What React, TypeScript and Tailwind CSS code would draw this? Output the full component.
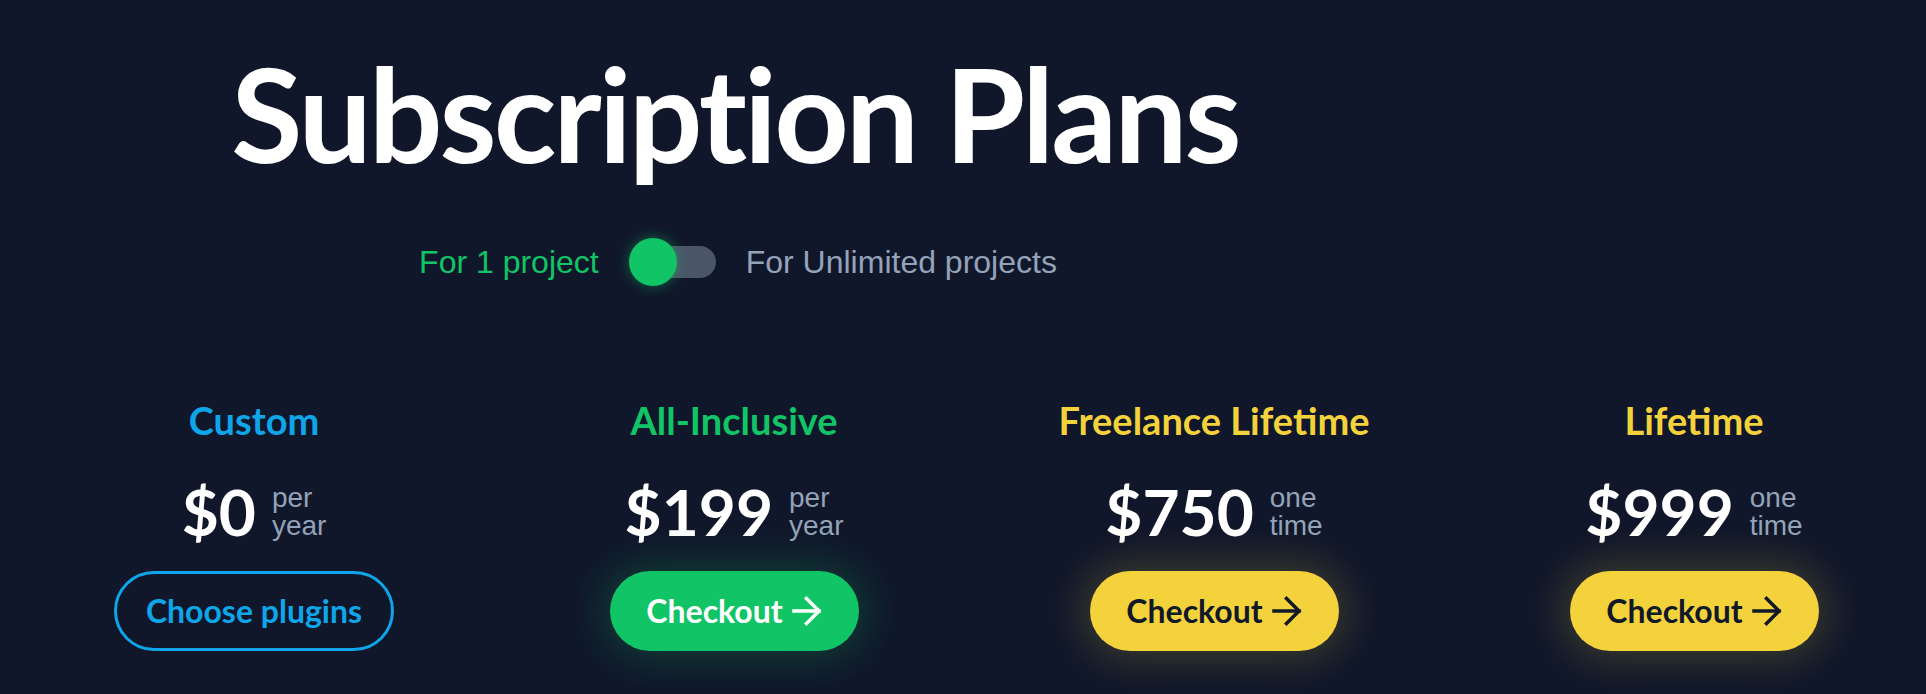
const plans = [
  {
    name: "Custom",
    price: "$0",
    unit: ["per", "year"],
    title: "text-[#0ea5e9]",
    button: "Choose plugins",
    kind: "outline",
  },
  {
    name: "All-Inclusive",
    price: "$199",
    unit: ["per", "year"],
    title: "text-[#11c466]",
    button: "Checkout",
    kind: "green",
  },
  {
    name: "Freelance Lifetime",
    price: "$750",
    unit: ["one", "time"],
    title: "text-[#f3d23c]",
    button: "Checkout",
    kind: "yellow",
  },
  {
    name: "Lifetime",
    price: "$999",
    unit: ["one", "time"],
    title: "text-[#f3d23c]",
    button: "Checkout",
    kind: "yellow",
  },
];

const Arrow = () => (
  <svg width="30" height="30" viewBox="0 0 30 30" fill="none" stroke="currentColor" strokeWidth="3.5" strokeLinecap="square">
    <path d="M2 15h25" />
    <path d="M14.5 2.5 27 15 14.5 27.5" />
  </svg>
);

const PlanButton = ({ kind, label }: { kind: string; label: string }) => {
  if (kind === "outline") {
    return (
      <button className="w-[280px] h-[80px] rounded-full border-[3px] border-[#0ea5e9] text-[#0ea5e9] text-[32px] font-bold flex items-center justify-center">
        {label}
      </button>
    );
  }

  const color =
    kind === "green"
      ? "bg-[#11c466] text-white shadow-[0_0_40px_8px_rgba(17,196,102,0.22)]"
      : "bg-[#f3d23c] text-[#111827] shadow-[0_0_40px_8px_rgba(243,210,60,0.2)]";

  return (
    <button className={`w-[249px] h-[80px] rounded-full text-[32px] font-bold flex items-center justify-center gap-[9px] ${color}`}>
      {label}
      <Arrow />
    </button>
  );
};

export default function App() {
  return (
    <div className="w-full h-[694px] overflow-hidden bg-[#10172a] font-['Lato',sans-serif]">
      {/* Header */}
      <div className="ml-[235px] w-[1000px] pt-[48px] flex flex-col items-center">
        <h1 className="text-[130px] leading-none font-bold text-white tracking-[-3px] whitespace-nowrap">
          Subscription Plans
        </h1>

        <div className="mt-[60px] ml-[6px] flex items-center gap-[30px] font-['Liberation_Sans',sans-serif] text-[32px] whitespace-nowrap">
          <span className="text-[#11c466]">For 1 project</span>
          <div className="relative w-[87px] h-[48px]">
            <div className="absolute right-0 top-2 w-[80px] h-8 rounded-full bg-[#4b5568]" />
            <div className="absolute left-0 top-0 w-12 h-12 rounded-full bg-[#11c466] shadow-[0_0_14px_rgba(17,196,102,0.45)]" />
          </div>
          <span className="text-[#94a3b8]">For Unlimited projects</span>
        </div>
      </div>

      {/* Plans */}
      <div className="mt-[112px] pl-[34px] grid grid-cols-[repeat(4,440px)] gap-x-[40px]">
        {plans.map((plan) => (
          <div key={plan.name} className="flex flex-col items-center">
            <h2 className={`text-[38px] leading-[44px] font-bold whitespace-nowrap ${plan.title}`}>{plan.name}</h2>

            <div className="mt-[40px] flex items-center gap-[16px]">
              <span className="text-[64px] leading-[60px] font-bold text-white">{plan.price}</span>
              <div className="font-['Liberation_Sans',sans-serif] text-[28px] leading-[28px] text-[#94a3b8]">
                <div>{plan.unit[0]}</div>
                <div>{plan.unit[1]}</div>
              </div>
            </div>

            <div className="mt-[29px]">
              <PlanButton kind={plan.kind} label={plan.button} />
            </div>
          </div>
        ))}
      </div>
    </div>
  );
}
